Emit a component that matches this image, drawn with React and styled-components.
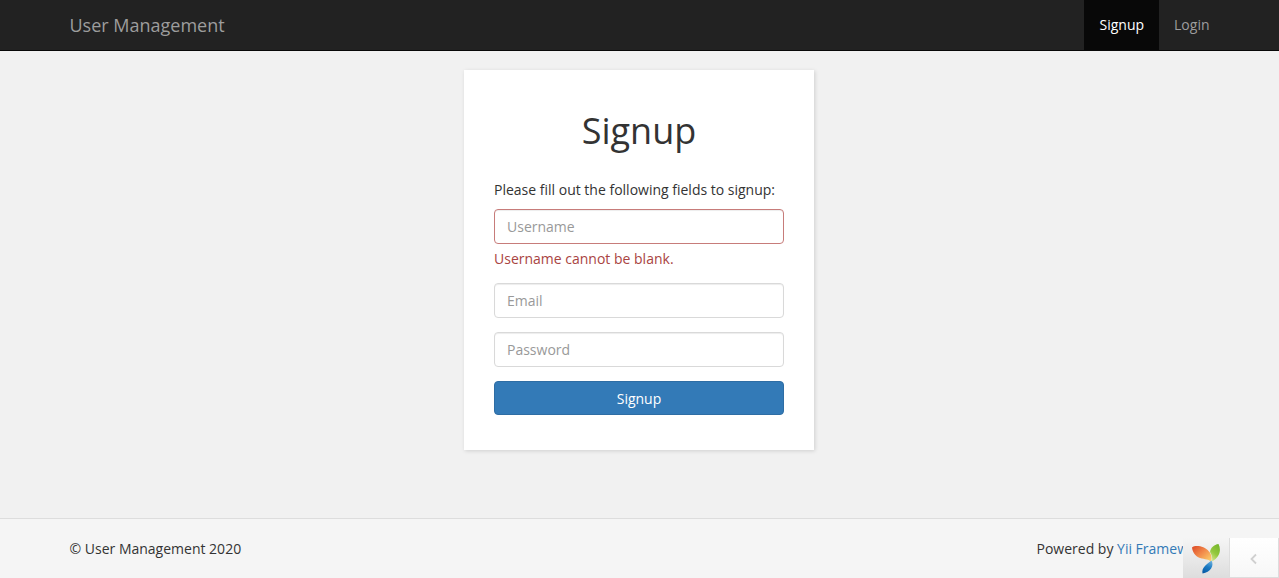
import React from "react";
import styled, { createGlobalStyle } from "styled-components";

const GlobalStyle = createGlobalStyle`
  *, *::before, *::after { box-sizing: border-box; }
  body {
    margin: 0;
    background: #f1f1f1;
    color: #333;
    font: 14px/20px "Open Sans", "Liberation Sans", sans-serif;
  }
  a { color: #337ab7; text-decoration: none; }
`;

const Page = styled.div`
  min-height: 100vh;
  display: flex;
  flex-direction: column;
`;

const Container = styled.div`
  width: 100%;
  max-width: 1170px;
  margin: 0 auto;
  padding: 0 15px;
  display: flex;
  justify-content: space-between;
`;

const Navbar = styled.header`
  background: #222;
  border-bottom: 1px solid #080808;
`;

const Brand = styled.a`
  padding: 15px 0;
  font-size: 18px;
  color: #9d9d9d;
`;

const Nav = styled.nav`
  display: flex;
  margin-right: -15px;
`;

const NavLink = styled.a`
  padding: 15px;
  color: ${(p) => (p.$active ? "#fff" : "#9d9d9d")};
  background: ${(p) => (p.$active ? "#080808" : "transparent")};
`;

const Main = styled.main`
  flex: 1;
  padding: 19px 16px 19px 15px;
`;

const Card = styled.form`
  width: 100%;
  max-width: 350px;
  margin: 0 auto;
  padding: 41px 30px 35px;
  background: #fff;
  box-shadow: 1px 1px 4px rgba(0, 0, 0, 0.14);
  display: flex;
  flex-direction: column;
  gap: 14px;
`;

const Title = styled.h1`
  margin: 0 0 15px;
  font-size: 36px;
  font-weight: 400;
  line-height: 40px;
  text-align: center;
`;

const Intro = styled.p`
  margin: 0 0 -5px;
`;

const Field = styled.div`
  display: flex;
  flex-direction: column;
  gap: 5px;
`;

const Input = styled.input`
  width: 100%;
  height: 35px;
  padding: 6px 12px;
  border: 1px solid ${(p) => (p.$invalid ? "#c77c7a" : "#d9d9d9")};
  border-radius: 4px;
  background: #fff;
  box-shadow: inset 0 1px 1px rgba(0, 0, 0, 0.075);
  color: #555;
  font: inherit;
  &::placeholder { color: #999; opacity: 1; }
`;

const FieldError = styled.div`
  color: #a94442;
`;

const SubmitButton = styled.button`
  height: 34px;
  padding: 7px 12px 5px;
  border: 1px solid #2e6da4;
  border-radius: 4px;
  background: #337ab7;
  color: #fff;
  font: inherit;
  cursor: pointer;
`;

const Footer = styled.footer`
  padding: 20px 0 19px;
  background: #f5f5f5;
  border-top: 1px solid #ddd;
`;

const DebugToolbar = styled.aside`
  position: fixed;
  right: 0;
  bottom: 0;
  height: 40px;
  display: flex;
`;

const DebugLogo = styled.a`
  width: 46px;
  display: flex;
  align-items: center;
  justify-content: center;
  background: linear-gradient(#f5f5f5, #dddddd);
`;

const DebugToggle = styled.button`
  width: 50px;
  padding: 3px 0 0;
  display: flex;
  align-items: center;
  justify-content: center;
  border: 1px solid #ddd;
  border-width: 0 1px 1px;
  background: linear-gradient(#fff, #f7f7f7);
  cursor: pointer;
`;

function YiiLogo() {
  return (
    <svg width="30" height="32" viewBox="0 0 30 32" aria-hidden="true">
      <defs>
        <linearGradient id="orange" x1="0" y1="0" x2="1" y2="0.9">
          <stop offset="0" stopColor="#dc4927" />
          <stop offset="0.5" stopColor="#f28b4b" />
          <stop offset="1" stopColor="#fbd36c" />
        </linearGradient>
        <linearGradient id="green" x1="0.8" y1="0" x2="0.3" y2="1">
          <stop offset="0" stopColor="#75b62c" />
          <stop offset="0.55" stopColor="#94c83d" />
          <stop offset="1" stopColor="#d3e58a" />
        </linearGradient>
        <linearGradient id="blue" x1="0.7" y1="0" x2="0.3" y2="1">
          <stop offset="0" stopColor="#67acdc" />
          <stop offset="0.5" stopColor="#1979c2" />
          <stop offset="1" stopColor="#075ba6" />
        </linearGradient>
      </defs>
      <path d="M1 5.5C4 3 13 3.500 18 9.500C21 13 21 17 20 20C18 17 14 17.500 9 16C4 14 1.500 10 1 5.5Z" fill="url(#orange)" />
      <path d="M27.500 2C30.500 8 29 15 21 19.500C21.500 16 21 13 19 10C19.500 6 23 2.500 27.500 2Z" fill="url(#green)" />
      <path d="M20.500 18.500C23.500 23.500 19.500 30.500 11.500 31.500C10.500 25.500 15 23 20.500 18.500Z" fill="url(#blue)" />
    </svg>
  );
}

function ChevronLeft() {
  return (
    <svg width="8" height="12" viewBox="0 0 8 12" fill="none" stroke="#d0d0d0" strokeWidth="1.8" aria-hidden="true">
      <path d="M6 1.500L1.500 6L6 10.500" />
    </svg>
  );
}

export default function App() {
  return (
    <Page>
      <GlobalStyle />
      <Navbar>
        <Container>
          <Brand href="#">User Management</Brand>
          <Nav>
            <NavLink href="#signup" $active aria-current="page">Signup</NavLink>
            <NavLink href="#login">Login</NavLink>
          </Nav>
        </Container>
      </Navbar>
      <Main>
        <Card noValidate onSubmit={(e) => e.preventDefault()}>
          <Title>Signup</Title>
          <Intro>Please fill out the following fields to signup:</Intro>
          <Field>
            <Input $invalid type="text" placeholder="Username" aria-label="Username" aria-invalid="true" aria-describedby="username-error" />
            <FieldError id="username-error">Username cannot be blank.</FieldError>
          </Field>
          <Field>
            <Input type="email" placeholder="Email" aria-label="Email" />
          </Field>
          <Field>
            <Input type="password" placeholder="Password" aria-label="Password" />
          </Field>
          <SubmitButton type="submit">Signup</SubmitButton>
        </Card>
      </Main>
      <Footer>
        <Container>
          <span>© User Management 2020</span>
          <span>Powered by <a href="#yii">Yii Framework</a></span>
        </Container>
      </Footer>
      <DebugToolbar>
        <DebugLogo href="#debug" aria-label="Yii Debugger"><YiiLogo /></DebugLogo>
        <DebugToggle type="button" aria-label="Open debug toolbar"><ChevronLeft /></DebugToggle>
      </DebugToolbar>
    </Page>
  );
}
